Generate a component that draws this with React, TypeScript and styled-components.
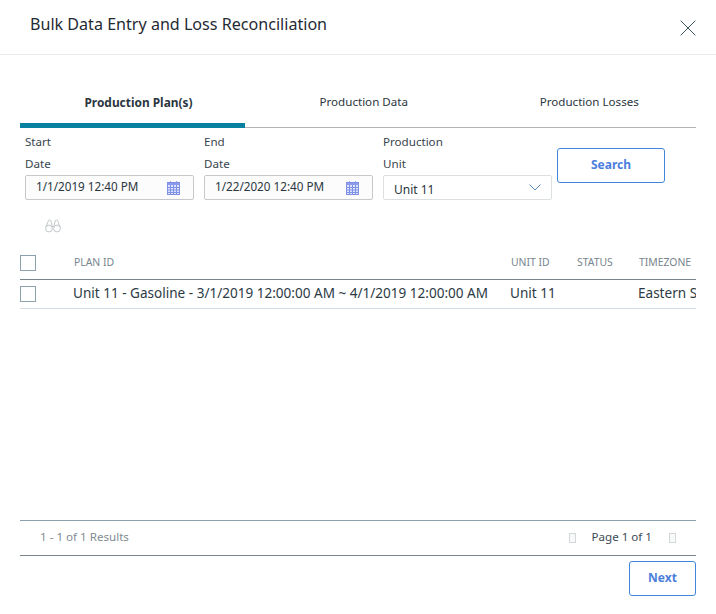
import React from "react";
import styled, { createGlobalStyle } from "styled-components";

const Global = createGlobalStyle`
  html, body { margin: 0; padding: 0; background: #fff; }
  body { font-family: "Noto Sans", "Open Sans", sans-serif; color: #2b3a44; }
  * { box-sizing: border-box; }
`;

const Dialog = styled.div`
  width: 716px;
  height: 614px;
  display: flex;
  flex-direction: column;
  overflow: hidden;
  background: #fff;
`;

const Header = styled.header`
  height: 55px;
  flex: none;
  display: flex;
  justify-content: space-between;
  padding: 13px 20px 0 30px;
  border-bottom: 1px solid #ebebeb;
`;

const Title = styled.h1`
  margin: 0;
  font-size: 16.1px;
  line-height: 22px;
  font-weight: 400;
  color: #1f2a33;
`;

const CloseButton = styled.button`
  width: 16px;
  height: 16px;
  margin-top: 7px;
  padding: 0;
  border: 0;
  background: none;
  display: block;
`;

const Body = styled.main`
  flex: 1;
  min-height: 0;
  display: flex;
  flex-direction: column;
  padding: 0 20px;
`;

const Tabs = styled.nav`
  margin-top: 33px;
  height: 40px;
  flex: none;
  display: grid;
  grid-template-columns: 225px 1fr 1fr;
  border-bottom: 1px solid #b4b4b4;
`;

const Tab = styled.div<{ $active?: boolean }>`
  height: 40px;
  padding: 5px 0 0 12px;
  text-align: center;
  font-size: ${(p) => (p.$active ? "11.9px" : "11.6px")};
  line-height: 18px;
  font-weight: ${(p) => (p.$active ? 700 : 400)};
  color: #2b3640;
  border-bottom: ${(p) => (p.$active ? "5px solid #08809f" : "0")};
`;

const Filters = styled.section`
  flex: none;
  height: 73px;
  padding: 3px 0 0 5px;
  display: grid;
  grid-template-columns: 179px 179px 174px 108px;
`;

const Field = styled.div`
  width: 169px;
  display: flex;
  flex-direction: column;
`;

const Label = styled.label`
  font-size: 11.6px;
  line-height: 21px;
  color: #38444d;
  height: 21px;

  & + & {
    margin-top: 1px;
  }
`;

const DateBox = styled.div`
  height: 25px;
  margin-top: 1px;
  padding: 0 13px 0 10px;
  display: flex;
  align-items: center;
  justify-content: space-between;
  border: 1px solid #c6c9cb;
  border-radius: 2px;
  background: #fcfcfc;
  font-size: 11.7px;
  color: #2b3640;
`;

const DateText = styled.span`
  margin-top: -3px;
`;

const SelectBox = styled(DateBox)`
  padding: 0 10px 0 10px;
  border-color: #dcdfe1;
  background: #fff;
`;

const SelectText = styled.span`
  margin-top: 4px;
  font-size: 12px;
`;

const PrimaryButton = styled.button<{ $w: number }>`
  width: ${(p) => p.$w}px;
  height: 35px;
  padding: 0 0 2px;
  border: 1px solid #3f86dc;
  border-radius: 3px;
  background: #fff;
  color: #4a80dc;
  font-family: inherit;
  font-size: 12px;
  font-weight: 700;
`;

const SearchCell = styled.div`
  padding-top: 17px;
`;

const Toolbar = styled.div`
  flex: none;
  height: 50px;
  padding: 15px 0 0 25px;
`;

const GridScroll = styled.div`
  flex: 1;
  min-height: 0;
  overflow: hidden;
`;

const Row = styled.div<{ $head?: boolean }>`
  display: grid;
  grid-template-columns: 53px 437px 66px 62px 200px;
  align-items: center;
  width: 818px;
  height: 28px;
  padding-bottom: ${(p) => (p.$head ? "5px" : "0")};
`;

const RowLine = styled.div<{ $dark?: boolean }>`
  width: 100%;
  border-bottom: 1px solid ${(p) => (p.$dark ? "#78858c" : "#d6dee3")};
  overflow: hidden;
`;

const Check = styled.span`
  display: block;
  width: 16px;
  height: 16px;
  border: 1px solid #8ba1ab;
  background: #fff;
`;

const HeadCell = styled.div`
  padding-left: 1px;
  font-size: 10.4px;
  line-height: 14px;
  color: #77858d;
  white-space: nowrap;
  margin-top: -1px;
`;

const Cell = styled.div`
  font-size: 13.55px;
  line-height: 18px;
  color: #2b3a44;
  white-space: nowrap;
  margin-top: -3px;
`;

const Pager = styled.footer`
  flex: none;
  height: 36px;
  display: flex;
  align-items: center;
  justify-content: space-between;
  padding: 0 20px 4px 20px;
  border-top: 1px solid #8ba1ab;
  border-bottom: 1px solid #78858c;
`;

const Results = styled.span`
  font-size: 11.6px;
  color: #7f8b92;
`;

const PageInfo = styled.div`
  display: flex;
  align-items: center;
  font-size: 11.6px;
  color: #3d4a53;
`;

const PageLabel = styled.span`
  margin: 0 17px 0 16px;
`;

const Tofu = styled.span`
  display: block;
  width: 7px;
  height: 10px;
  margin-top: 3px;
  border: 1px solid #d4d8db;
  background: #f8f9f9;
`;

const Actions = styled.div`
  flex: none;
  height: 58px;
  padding-top: 5px;
  display: flex;
  justify-content: flex-end;
`;

const CalendarIcon = () => (
  <svg width="13" height="14" viewBox="0 0 13 14" fill="none" stroke="#7f8fe6" strokeWidth="1">
    <path d="M3.5 0v2M9.5 0v2" stroke="#9aa6ee" />
    <rect x="0.5" y="1.5" width="12" height="12" fill="#dfe3fb" />
    <path d="M0.5 2.5h12M0.5 3.5h12" stroke="#8c9bea" />
    <path d="M0.5 6.5h12M0.5 9h12M0.5 11.5h12M3.5 4v9.5M6.5 4v9.5M9.5 4v9.5" stroke="#7f93e6" />
  </svg>
);

const Chevron = () => (
  <svg width="12" height="7" viewBox="0 0 12 7" fill="none" stroke="#5a8fc0" strokeWidth="1">
    <path d="M0.5 0.5L6 6L11.5 0.5" />
  </svg>
);

const Binoculars = () => (
  <svg width="16" height="14" viewBox="0 0 16 14" fill="none" stroke="#c3c8cb" strokeWidth="1">
    <circle cx="4" cy="9.5" r="3.4" />
    <circle cx="12" cy="9.5" r="3.4" />
    <path d="M1 8L3.5 1.5Q4.5 0.5 5.8 1.5L7 7M15 8L12.5 1.5Q11.5 0.5 10.2 1.5L9 7M7 7.5h2" />
  </svg>
);

const CloseIcon = () => (
  <svg width="16" height="16" viewBox="0 0 16 16" fill="none" stroke="#3f5563" strokeWidth="1">
    <path d="M0.7 0.7L15.3 15.3M15.3 0.7L0.7 15.3" />
  </svg>
);

export default function App() {
  return (
    <>
      <Global />
      <Dialog>
        <Header>
          <Title>Bulk Data Entry and Loss Reconciliation</Title>
          <CloseButton aria-label="Close">
            <CloseIcon />
          </CloseButton>
        </Header>
        <Body>
          <Tabs>
            <Tab $active>Production Plan(s)</Tab>
            <Tab>Production Data</Tab>
            <Tab>Production Losses</Tab>
          </Tabs>
          <Filters>
            <Field>
              <Label>Start</Label>
              <Label>Date</Label>
              <DateBox>
                <DateText>1/1/2019 12:40 PM</DateText>
                <CalendarIcon />
              </DateBox>
            </Field>
            <Field>
              <Label>End</Label>
              <Label>Date</Label>
              <DateBox>
                <DateText>1/22/2020 12:40 PM</DateText>
                <CalendarIcon />
              </DateBox>
            </Field>
            <Field>
              <Label>Production</Label>
              <Label>Unit</Label>
              <SelectBox>
                <SelectText>Unit 11</SelectText>
                <Chevron />
              </SelectBox>
            </Field>
            <SearchCell>
              <PrimaryButton $w={108}>Search</PrimaryButton>
            </SearchCell>
          </Filters>
          <Toolbar>
            <Binoculars />
          </Toolbar>
          <GridScroll>
            <RowLine $dark>
              <Row $head>
                <Check />
                <HeadCell>PLAN ID</HeadCell>
                <HeadCell>UNIT ID</HeadCell>
                <HeadCell>STATUS</HeadCell>
                <HeadCell>TIMEZONE</HeadCell>
              </Row>
            </RowLine>
            <RowLine>
              <Row>
                <Check />
                <Cell>Unit 11 - Gasoline - 3/1/2019 12:00:00 AM ~ 4/1/2019 12:00:00 AM</Cell>
                <Cell>Unit 11</Cell>
                <Cell />
                <Cell>Eastern Standard Time</Cell>
              </Row>
            </RowLine>
          </GridScroll>
          <Pager>
            <Results>1 - 1 of 1 Results</Results>
            <PageInfo>
              <Tofu />
              <PageLabel>Page 1 of 1</PageLabel>
              <Tofu />
            </PageInfo>
          </Pager>
          <Actions>
            <PrimaryButton $w={67}>Next</PrimaryButton>
          </Actions>
        </Body>
      </Dialog>
    </>
  );
}
